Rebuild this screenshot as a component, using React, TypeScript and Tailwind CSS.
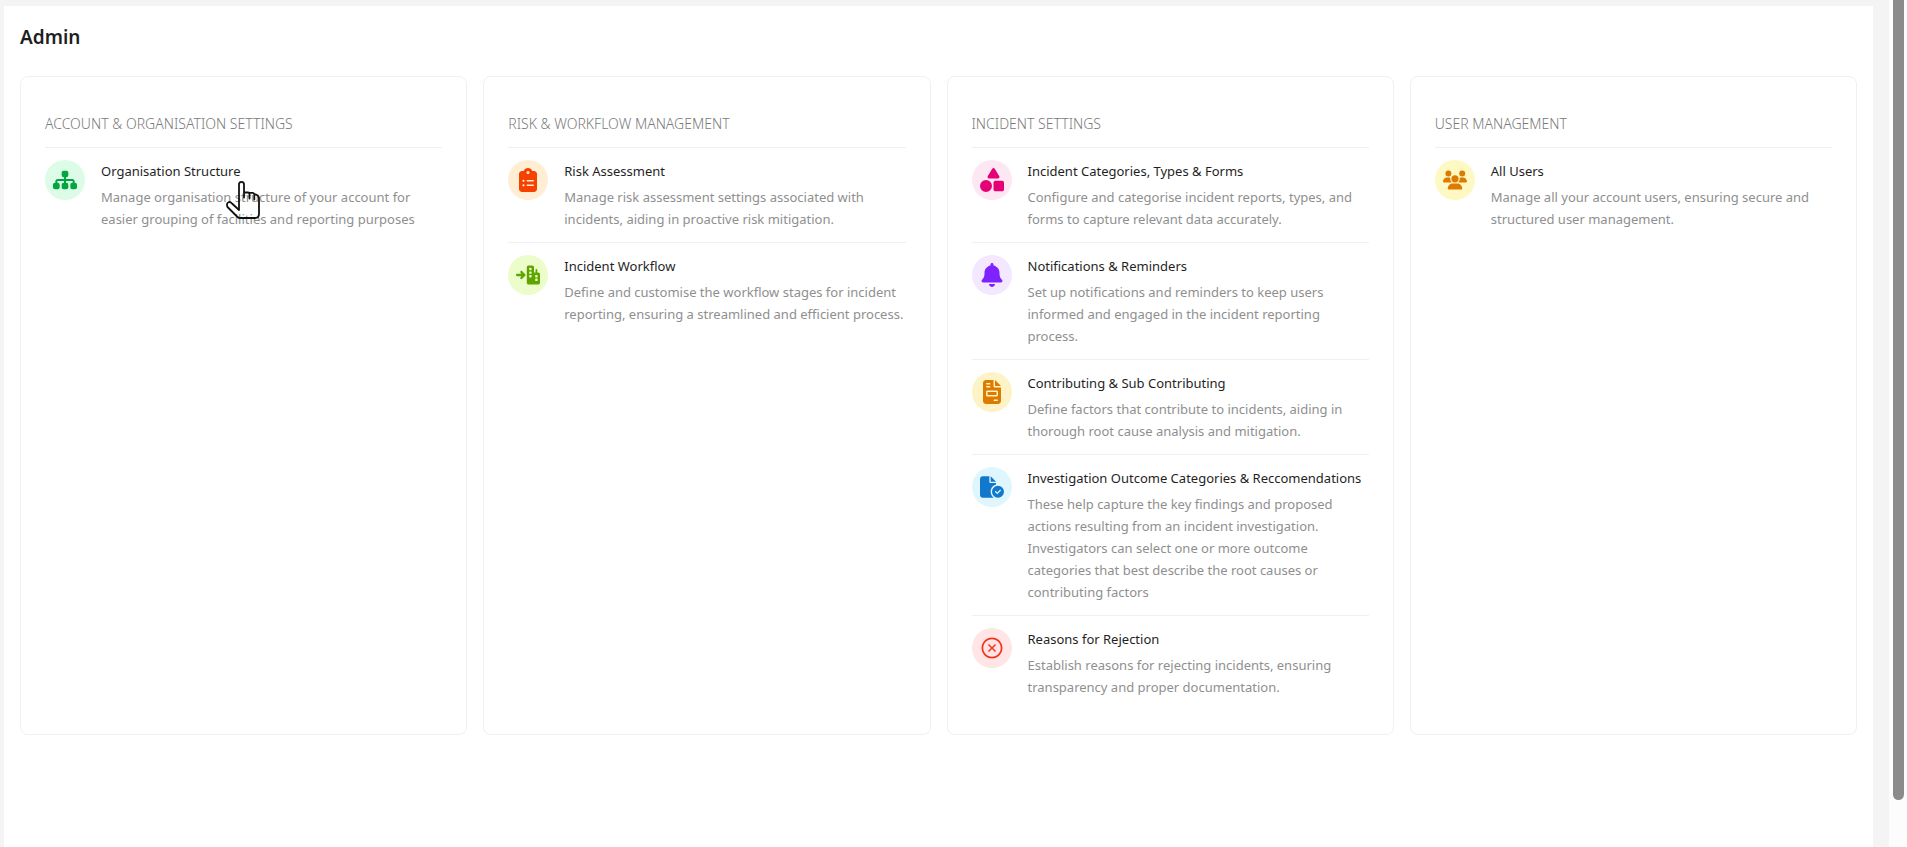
import type { ReactNode } from "react";
import type { IconType } from "react-icons";
import {
  FaArrowRightToCity,
  FaBell,
  FaClipboardList,
  FaFileCircleCheck,
  FaFileInvoice,
  FaShapes,
  FaSitemap,
  FaUsers,
} from "react-icons/fa6";
import { AiOutlineCloseCircle } from "react-icons/ai";

type Item = {
  title: string;
  text: string;
  icon: IconType;
  tone: string;
  overlay?: ReactNode;
};

type Section = { heading: string; items: Item[] };

function HandPointer() {
  return (
    <svg
      aria-hidden="true"
      viewBox="0 0 36 40"
      className="pointer-events-none absolute top-8 left-[124px] h-10 w-9"
      fill="none"
      stroke="#111"
      strokeWidth="1.8"
      strokeLinejoin="round"
      strokeLinecap="round"
    >
      <path d="M14 30V4.500Q14 1.800 16.500 1.800Q19 1.800 19 4.500V17.500M19 12.500H23Q24.500 12.500 24.500 14.500V18.500M24.500 12.800H28Q29.300 13 29.300 15V19.500M29.300 14.500H31Q34 15.500 34 18.500V34Q34 38 30 38H15Q13.500 38 12.500 37L2.500 27Q1 23 4 22Q5.500 21.800 7 23.500L14 30" />
    </svg>
  );
}

const sections: Section[] = [
  {
    heading: "Account & Organisation Settings",
    items: [
      {
        title: "Organisation Structure",
        text: "Manage organisation structure of your account for easier grouping of facilities and reporting purposes",
        icon: FaSitemap,
        tone: "bg-[#dcfce7] text-[#00a63e]",
        overlay: <HandPointer />,
      },
    ],
  },
  {
    heading: "Risk & Workflow Management",
    items: [
      {
        title: "Risk Assessment",
        text: "Manage risk assessment settings associated with incidents, aiding in proactive risk mitigation.",
        icon: FaClipboardList,
        tone: "bg-[#ffedd4] text-[#f54200]",
      },
      {
        title: "Incident Workflow",
        text: "Define and customise the workflow stages for incident reporting, ensuring a streamlined and efficient process.",
        icon: FaArrowRightToCity,
        tone: "bg-[#ecfcca] text-[#5ea500]",
      },
    ],
  },
  {
    heading: "Incident Settings",
    items: [
      {
        title: "Incident Categories, Types & Forms",
        text: "Configure and categorise incident reports, types, and forms to capture relevant data accurately.",
        icon: FaShapes,
        tone: "bg-[#fce7f3] text-[#e60076]",
      },
      {
        title: "Notifications & Reminders",
        text: "Set up notifications and reminders to keep users informed and engaged in the incident reporting process.",
        icon: FaBell,
        tone: "bg-[#f3e8ff] text-[#7f22fe]",
      },
      {
        title: "Contributing & Sub Contributing",
        text: "Define factors that contribute to incidents, aiding in thorough root cause analysis and mitigation.",
        icon: FaFileInvoice,
        tone: "bg-[#fef3c6] text-[#dd7a00]",
      },
      {
        title: "Investigation Outcome Categories & Reccomendations",
        text: "These help capture the key findings and proposed actions resulting from an incident investigation. Investigators can select one or more outcome categories that best describe the root causes or contributing factors",
        icon: FaFileCircleCheck,
        tone: "bg-[#dff6fe] text-[#1278cc]",
      },
      {
        title: "Reasons for Rejection",
        text: "Establish reasons for rejecting incidents, ensuring transparency and proper documentation.",
        icon: AiOutlineCloseCircle,
        tone: "bg-[#ffe5e5] text-[#f5361e]",
      },
    ],
  },
  {
    heading: "User Management",
    items: [
      {
        title: "All Users",
        text: "Manage all your account users, ensuring secure and structured user management.",
        icon: FaUsers,
        tone: "bg-[#fef9c2] text-[#dd7a00]",
      },
    ],
  },
];

function SettingItem({ item }: { item: Item }) {
  const Icon = item.icon;
  return (
    <li className="relative flex gap-4 border-t border-[#f0f0f0] py-3">
      <span className={`flex size-10 shrink-0 items-center justify-center rounded-full ${item.tone}`}>
        <Icon className="size-6" aria-hidden="true" />
      </span>
      <div className="min-w-0 flex-1">
        <h3 className="mb-1 leading-[22px] text-[#1f1f1f]">
          <a href="#">{item.title}</a>
        </h3>
        <p className="leading-[22px] text-[#8f8f8f]">{item.text}</p>
      </div>
      {item.overlay && <div className="absolute inset-y-0 left-14">{item.overlay}</div>}
    </li>
  );
}

export default function App() {
  return (
    <div className="flex h-screen overflow-hidden bg-[#f4f4f4] font-['Noto_Sans',sans-serif] text-[13px]">
      <main className="mt-1.5 mr-4 ml-1 flex-1 bg-white px-4">
        <h1 className="mt-4 mb-6 text-[19px] leading-[30px] font-semibold text-[#1f1f1f]">Admin</h1>
        <div className="grid grid-cols-4 gap-4">
          {sections.map((section) => (
            <section key={section.heading} className="rounded-lg border border-[#f0f0f0] p-6">
              <h2 className="py-3 text-sm leading-[22px] font-light text-[#7a7a7a] uppercase">{section.heading}</h2>
              <ul>
                {section.items.map((item) => (
                  <SettingItem key={item.title} item={item} />
                ))}
              </ul>
            </section>
          ))}
        </div>
      </main>
      <div className="h-full w-[18px] bg-[#fcfcfc] pl-1" aria-hidden="true">
        <div className="h-[800px] w-[11px] rounded-b-full bg-[#8b8b8b]" />
      </div>
    </div>
  );
}
